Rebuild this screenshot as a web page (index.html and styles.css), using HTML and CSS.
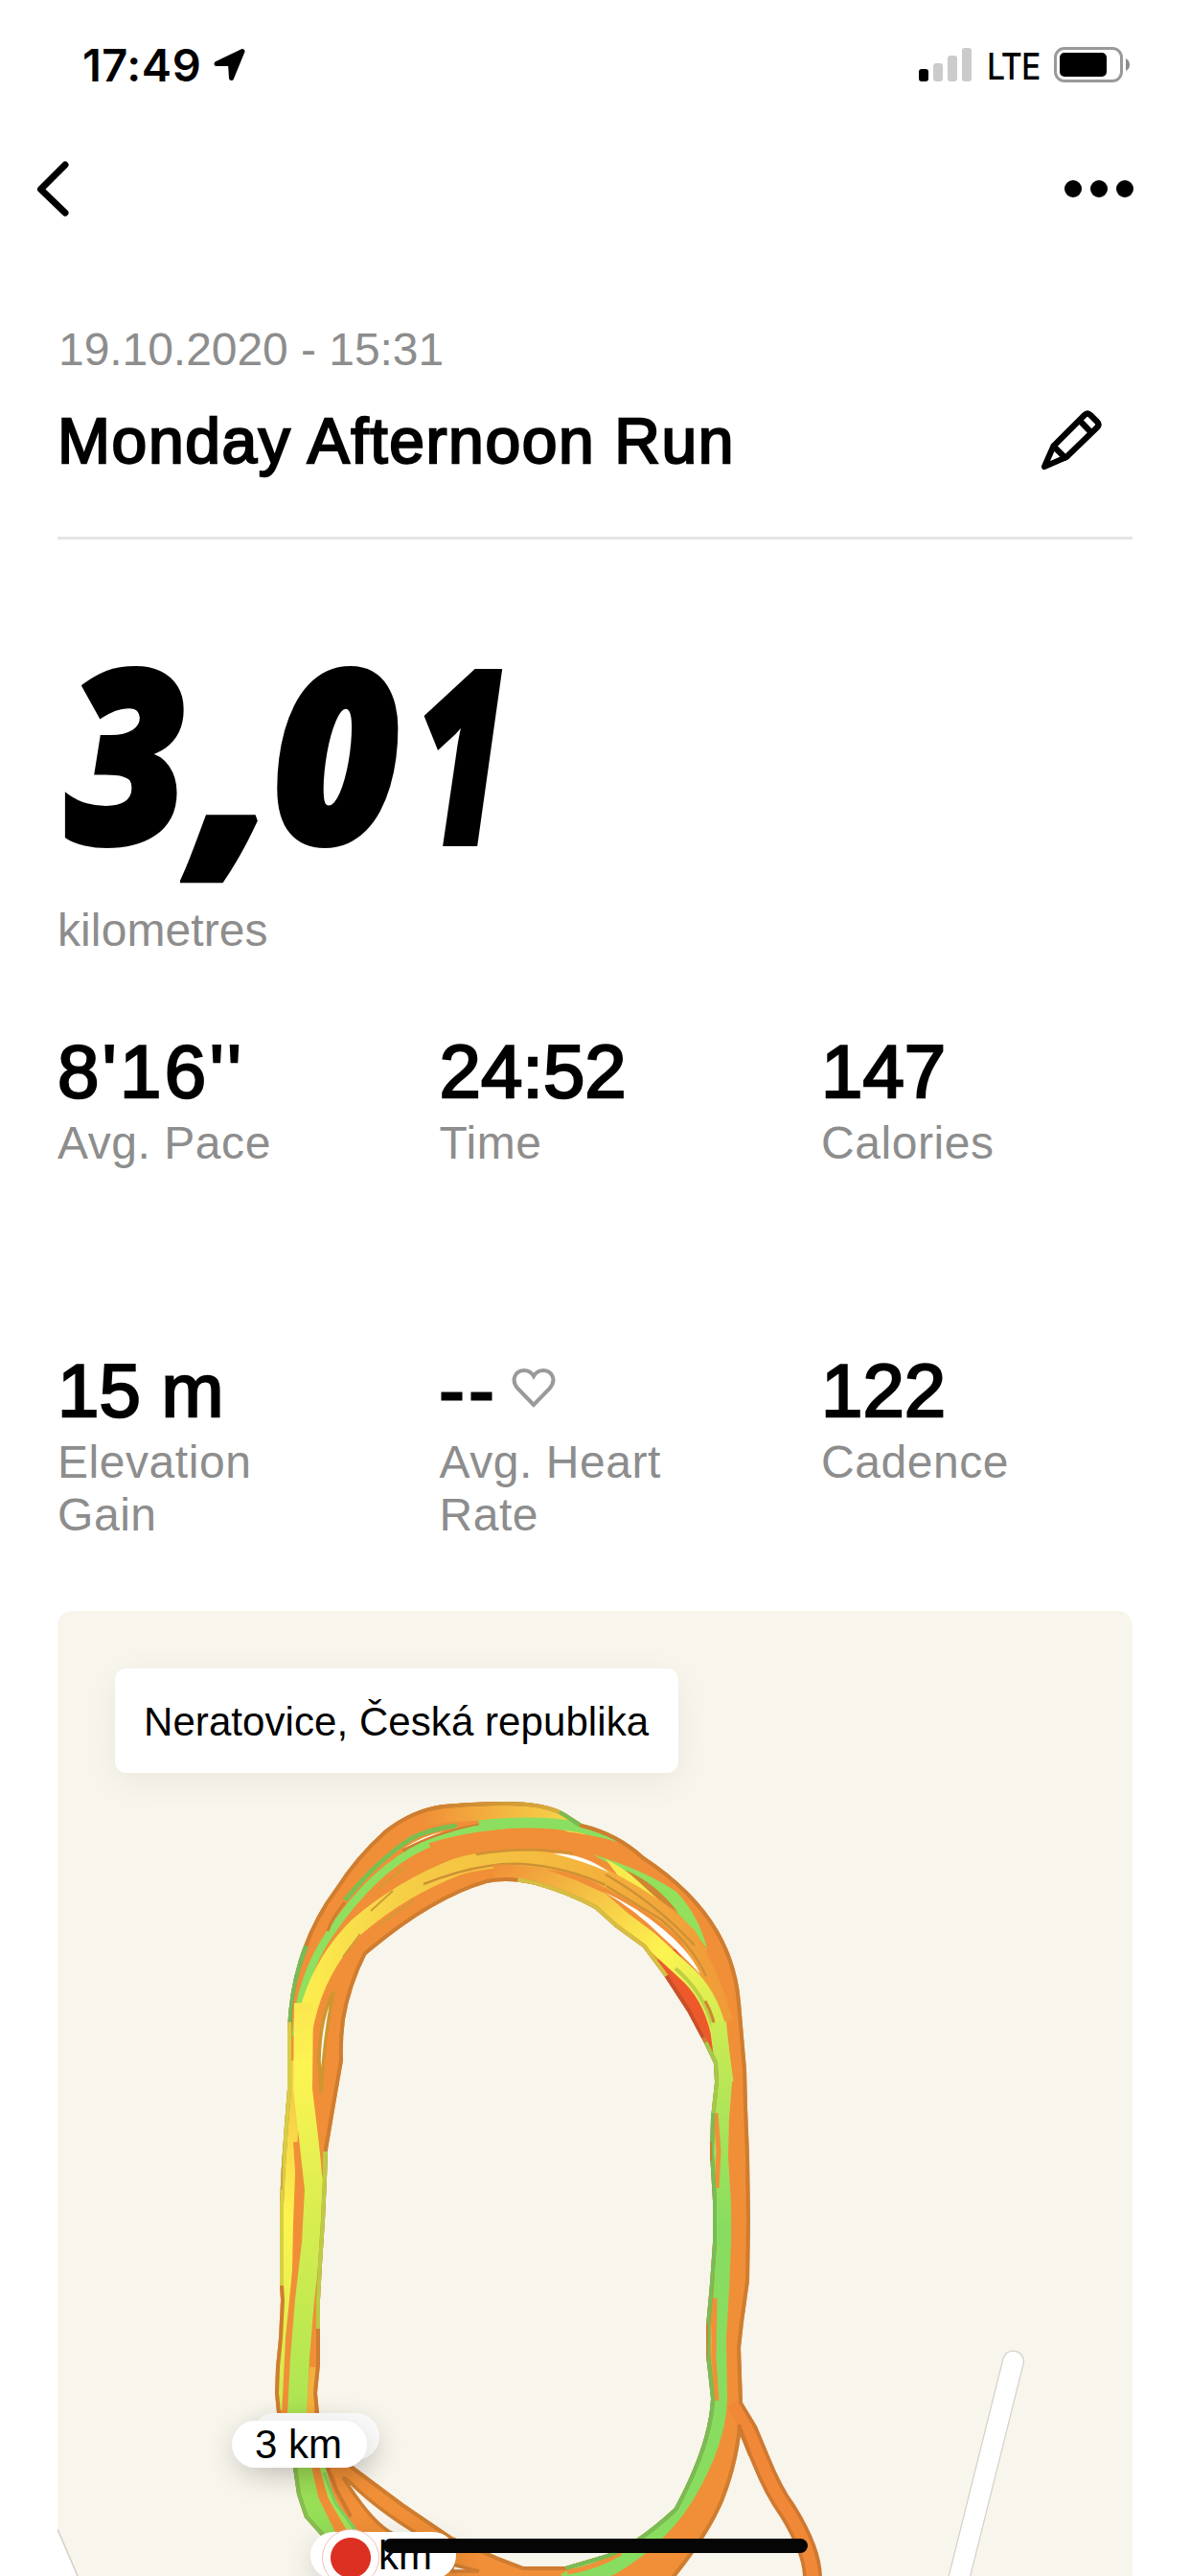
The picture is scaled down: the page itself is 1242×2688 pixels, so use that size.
FILE: index.html
```html
<!DOCTYPE html>
<html lang="en">
<head>
<meta charset="utf-8">
<title>Monday Afternoon Run</title>
<link rel="stylesheet" href="styles.css">
</head>
<body>
<div class="screen">
  <div class="status">
    <div class="status-left">
      <span class="clock">17:49</span>
      <svg class="location" viewBox="0 0 34 36"><path d="M3 16.500 L30 3.500 L18.500 31.500 L17.500 16.500 Z" fill="#000" stroke="#000" stroke-width="5" stroke-linejoin="round"/></svg>
    </div>
    <div class="status-right">
      <svg class="signal" viewBox="0 0 55 36">
        <rect x="0" y="22" width="10" height="13" rx="3"/>
        <g fill="#cbcbcb"><rect x="15" y="16" width="10" height="19" rx="3"/><rect x="30" y="8" width="10" height="27" rx="3"/><rect x="45" y="0" width="10" height="35" rx="3"/></g>
      </svg>
      <span class="network">LTE</span>
      <svg class="battery" viewBox="0 0 80 38">
        <rect x="1.500" y="1.500" width="69" height="34" rx="9.500" fill="none" stroke="#999" stroke-width="3"/>
        <rect x="6" y="6" width="49" height="25" rx="5"/>
        <path d="M75 12 q4 2 4 6.500 t-4 6.500z" fill="#8c8c8c"/>
      </svg>
    </div>
  </div>
  <nav class="nav">
    <svg class="back" viewBox="0 0 36 60"><path d="M31 5 L5.500 30.500 L31 55" fill="none" stroke="#000" stroke-width="7" stroke-linecap="round" stroke-linejoin="round"/></svg>
    <svg class="more" viewBox="0 0 74 20"><circle cx="10" cy="10" r="9"/><circle cx="37" cy="10" r="9"/><circle cx="64" cy="10" r="9"/></svg>
  </nav>
  <header class="heading">
    <div class="date">19.10.2020 - 15:31</div>
    <div class="title-row">
      <h1 class="title">Monday Afternoon Run</h1>
      <svg class="pencil" viewBox="15 15 66 66"><g fill="none" stroke="#000" stroke-width="6.200" stroke-linejoin="round" stroke-linecap="round"><path d="M28.500 55.500 L61 23 Q64 20 67 23 L74 30 Q77 33 74 36 L42 67 L19 77 Z"/><path d="M29 56 L40.500 67.500 M56 29 L67.500 41"/></g></svg>
    </div>
  </header>
  <section class="distance">
    <div class="distance-value"><span class="d3">3</span><span class="dc">,</span><span class="d0">0</span><span class="d1">1</span></div>
    <div class="label distance-label">kilometres</div>
  </section>
  <section class="stats">
    <div class="stat"><div class="value pace">8'16''</div><div class="label">Avg. Pace</div></div>
    <div class="stat"><div class="value">24:52</div><div class="label">Time</div></div>
    <div class="stat"><div class="value">147</div><div class="label">Calories</div></div>
    <div class="stat"><div class="value">15 m</div><div class="label">Elevation<br>Gain</div></div>
    <div class="stat"><div class="value dashes">--<svg class="heart" viewBox="0 0 46 44"><path d="M23 39 L6.500 22 C-2 12 5 3 13 3 Q19.500 3 23 9 Q26.500 3 33 3 C41 3 48 12 39.500 22 Z" fill="none" stroke="#999" stroke-width="4"/></svg></div><div class="label">Avg. Heart<br>Rate</div></div>
    <div class="stat"><div class="value">122</div><div class="label">Cadence</div></div>
  </section>
  <section class="map">
    <svg class="map-art" viewBox="60 1681 1122 1007">
      <defs>
        <path id="ring" clip-rule="evenodd" fill-rule="evenodd" d="M318 2627 L310 2603 L306 2575 L297 2545 L289 2518 L287 2497 L288 2470 L291 2440 L293 2400 L292 2385 V2300 L294 2260 L297 2217 L300 2180 V2120 Q301 2080 312 2045 Q325 2003 350 1970 Q371 1937 401 1910 Q430 1887 463 1883 Q495 1880 528 1880 Q570 1880 590 1892 L607 1903 Q645 1912 672 1937 Q725 1972 750 2015 Q770 2050 773 2090 L779 2160 L780 2200 L782 2250 L783 2317 L782 2380 L776 2423 L773 2450 L775 2508 Q775 2560 755 2610 Q738 2650 696 2700 H400 L336 2647 Z M382 2040 Q366 2072 360 2107 Q357 2130 358 2150 L351 2190 L342 2243 L341 2273 L339 2317 L336 2363 L334 2400 V2467 L331 2497 L333 2518 L345 2555 L367 2572 L422 2613 L472 2647 L520 2668 L546 2678 H590 L624 2668 Q658 2660 704 2617 Q740 2550 742 2503 L737 2457 V2427 L741 2383 L744 2340 V2297 L741 2247 L742 2210 L746 2173 L745 2153 L735 2132 L718 2100 L694 2063 L671 2032 L642 2011 L621 1992 Q594 1977 559 1967 Q530 1960 508 1965 Q450 1982 382 2040 Z"/>
        <clipPath id="track"><use href="#ring"/></clipPath>
        <linearGradient id="left" gradientUnits="userSpaceOnUse" x1="0" y1="1950" x2="0" y2="2640">
          <stop offset="0" stop-color="#f4c846"/><stop offset=".3" stop-color="#fdf452"/><stop offset=".5" stop-color="#ddee50"/><stop offset=".7" stop-color="#bde950"/><stop offset="1" stop-color="#92dd58"/>
        </linearGradient>
        <linearGradient id="side" gradientUnits="userSpaceOnUse" x1="0" y1="2180" x2="0" y2="2520">
          <stop offset="0" stop-color="#f7c945"/><stop offset=".4" stop-color="#fdf450"/><stop offset="1" stop-color="#cdea4e"/>
        </linearGradient>
        <linearGradient id="crown" gradientUnits="userSpaceOnUse" x1="310" y1="0" x2="770" y2="0">
          <stop offset="0" stop-color="#fdf04f"/><stop offset=".25" stop-color="#f5cd46"/><stop offset=".6" stop-color="#f4b83e"/><stop offset="1" stop-color="#f09838"/>
        </linearGradient>
        <linearGradient id="outer" gradientUnits="userSpaceOnUse" x1="440" y1="0" x2="610" y2="0">
          <stop offset="0" stop-color="#f08f37"/><stop offset="1" stop-color="#f7dc4a"/>
        </linearGradient>
        <linearGradient id="outerEdge" gradientUnits="userSpaceOnUse" x1="440" y1="0" x2="610" y2="0">
          <stop offset="0" stop-color="#cf7d30"/><stop offset="1" stop-color="#d8b840"/>
        </linearGradient>
        <linearGradient id="inner" gradientUnits="userSpaceOnUse" x1="510" y1="1950" x2="760" y2="2170">
          <stop offset="0" stop-color="#f08f37"/><stop offset=".3" stop-color="#f5c445"/><stop offset=".58" stop-color="#fdf450"/><stop offset="1" stop-color="#bce852"/>
        </linearGradient>
        <linearGradient id="right" gradientUnits="userSpaceOnUse" x1="0" y1="2080" x2="0" y2="2320">
          <stop offset="0" stop-color="#d7ed51"/><stop offset="1" stop-color="#88dd60"/>
        </linearGradient>
      </defs>
      <!-- roads -->
      <path d="M60 2639 L81 2688 H60Z" fill="#fff"/>
      <path d="M60 2639 L81 2688" stroke="#d2cfc7" stroke-width="1.500"/>
      <path d="M1057.500 2464 L1001 2690" stroke="#d5d2ca" stroke-width="23" stroke-linecap="round"/>
      <path d="M1057.500 2464 L1001 2690" stroke="#fff" stroke-width="20.500" stroke-linecap="round"/>
      <!-- branch leaving the oval -->
      <path d="M764 2508 L781 2536 L794 2567 C804 2592 811 2605 822 2620 Q848 2662 848 2690" fill="none" stroke="#cf7830" stroke-width="20"/>
      <use href="#ring" fill="#f08f37"/>
      <g clip-path="url(#track)" fill="none" stroke-linejoin="round">
        <!-- north curve -->
        <path d="M400 1924 Q432 1896 465 1893 L528 1890 C575 1889 592 1900 612 1914" stroke="url(#outer)" stroke-width="17"/>
        <path d="M477 1905 Q450 1908 430 1918 Q395 1940 360 1983" stroke="#7cbf50" stroke-width="5"/>
        <path d="M421 1932 Q460 1911 514 1903" stroke="#cf7d30" stroke-width="5"/>
        <path d="M309 2125 Q312 2065 344 2018 Q390 1950 442 1926 Q485 1908 530 1904" stroke="#8fe05e" stroke-width="8"/>
        <path d="M500 1905 Q560 1898 607 1907 Q632 1914 652 1926" stroke="#8cde60" stroke-width="11"/>
        <path d="M360 1985 Q346 2002 342 2015" stroke="#cf7d30" stroke-width="3"/>
        <path d="M450 1931 Q500 1916 540 1917 Q600 1916 650 1932 Q690 1945 730 2000" stroke="#f08f37" stroke-width="16"/>
        <path d="M618 1935 Q670 1950 706 1974 Q730 2000 738 2034 Q700 1975 618 1935Z" fill="#93e05c"/>
        <path d="M652 1951 Q685 1965 708 1996 Q680 1978 652 1951Z" fill="#cf8531"/>
        <path d="M632 1940 Q650 1948 666 1963 Q705 1998 738 2036 Q700 2008 660 1977Z" fill="#f8eb4e"/>
        <path d="M756 2110 Q745 2067 718 2020 Q690 1990 632 1960 C590 1936 520 1935 477 1948 Q420 1970 373 2010 Q328 2055 317 2120 L315 2190" stroke="url(#crown)" stroke-width="18"/>
        <path d="M497 1935 Q552 1926 598 1934 M442 1966 Q500 1943 545 1945 Q590 1948 632 1967 M633 1968 L690 2003 Q722 2030 737 2062 M632 1956 Q683 1985 725 2030" stroke="#cf9135" stroke-width="2.500"/>
        <path d="M387 1994 L410 1973 M395 2009 L432 1983 M395 1970 L425 1947 M358 2042 L376 2018" stroke="#d29a38" stroke-width="2"/>
        <path d="M694 2040 L727 2092 L746 2150" stroke="#ee592c" stroke-width="26"/>
        <path d="M515 1954 H530 L562 1957 L598 1970 L627 1983 L650 2003 L678 2024 L714 2057 Q741 2080 750 2120 L757 2173" stroke="url(#inner)" stroke-width="17"/>
        <path d="M705 2054 Q735 2080 744 2115" stroke="#bfcf45" stroke-width="4"/>
        <path d="M736 2088 Q746 2105 748 2128" stroke="#cf8531" stroke-width="3"/>
        <!-- right straight and south curve -->
        <path d="M750 2110 L756 2173 L753 2210 L752 2250 L755 2300 L755 2340 L753 2390 L750 2440 L751 2503 Q750 2545 722 2595 Q695 2645 640 2678 L600 2694" stroke="url(#right)" stroke-width="16"/>
        <path d="M690 2620 Q665 2655 620 2680 L590 2695" stroke="#88dd60" stroke-width="20"/>
        <path d="M747 2205 L750 2245 L748 2283 M746 2398 L745 2460 L748 2505 M592 2684 Q620 2680 648 2664" stroke="#f09038" stroke-width="5"/>
        <!-- left straight -->
        <path d="M305 2150 L306 2210 L302 2270 L300 2320 L299 2370 L297 2450 L295 2515" stroke="url(#side)" stroke-width="12"/>
        <path d="M310 2235 L313 2280 L313 2325 L308 2380 L302 2440 L298 2520" stroke="#f08f37" stroke-width="8"/>
        <path d="M317 2090 L316 2180 L322 2230 L328 2285 L325 2340 L318 2400 L313 2460 L310 2520 L315 2575 L323 2610 L345 2655" stroke="url(#left)" stroke-width="20"/>
        <path d="M331 2150 L334 2200 L338 2270" stroke="#f08f37" stroke-width="4"/>
        <path d="M327 2470 L324 2518" stroke="#f3b03f" stroke-width="8"/>
        <path d="M334 2565 L345 2605 L368 2645" stroke="#a3e258" stroke-width="6"/>
        <path d="M338 2580 L350 2612 L375 2645" stroke="#7bd062" stroke-width="3"/>
        <path d="M336 2560 L352 2600 L366 2626" stroke="#cf7830" stroke-width="4"/>
        <!-- darker rims, outside then inside -->
        <g stroke-width="8" stroke="#cf7d30">
          <use href="#ring"/>
          <path d="M440 1887 L463 1883 Q495 1880 528 1880 Q570 1880 590 1892" stroke="url(#outerEdge)"/>
          <path d="M585 1889 L606 1903" stroke="#78bb52"/>
          <path d="M300 2110 Q302 2070 318 2030" stroke="#72bd57"/>
          <path d="M292 2385 V2300 L294 2260 L297 2217 L300 2180 V2110" stroke="#d6cf45"/>
          <path d="M293 2235 L292 2285" stroke="#cb9b38" stroke-width="5"/>
          <path d="M540 1963 L559 1967 Q594 1977 621 1992 L642 2011 L671 2032 L694 2063" stroke="#d6bf42"/>
          <path d="M694 2063 L718 2100 L732 2127" stroke="#cb4e2a"/>
          <path d="M735 2132 L745 2153 L746 2173 L742 2210" stroke="#a0cb4b"/>
          <path d="M742 2205 L741 2247 L744 2297 V2340 L741 2383 L737 2427 V2457 L742 2503 Q740 2550 704 2617 Q658 2660 624 2668 L590 2678" stroke="#77bd55"/>
          <path d="M741 2235 V2255 M737 2425 L736 2470" stroke="#cf7d30" stroke-width="4"/>
          <path d="M341 2245 L341 2273 L339 2317 L336 2363 L334 2400 V2430" stroke="#bccc45"/>
          <path d="M336 2647 L318 2627 L310 2603 L306 2575 L297 2545" stroke="#82c052"/>
        </g>
      </g>
      <path d="M764 2508 L781 2536 L794 2567 C804 2592 811 2605 822 2620 Q848 2662 848 2690" fill="none" stroke="#f08837" stroke-width="12.500"/>
      <!-- gaps between laps -->
      <g fill="#fffdf8">
        <path d="M630 1974 Q665 1990 692 2013 Q720 2036 731 2060 Q712 2040 690 2020 Q662 1992 630 1974Z"/>
        <path d="M577 1934 Q610 1934 636 1954 Q610 1942 577 1934Z"/>
        <path d="M421 1929 Q440 1916 463 1911 Q440 1919 421 1929Z"/>
        <g stroke-width="3.500">
          <path d="M348 2078 Q334 2105 333 2150 L335 2184 Q338 2130 348 2078Z" fill="#f8f5ec" stroke="#d0952f"/>
          <path d="M358 2585 L364 2589 Q400 2625 460 2658 Q430 2656 405 2641 Q385 2628 358 2585Z" fill="#f8f5ec" stroke="#cf7d30"/>
          <path d="M472 2676 L500 2683 H472Z" fill="#f8f5ec" stroke="#cf7d30"/>
        </g>
      </g>
      <path d="M771 2530 L783 2562" fill="none" stroke="#cf7830" stroke-width="4"/>
    </svg>
    <div class="place">Neratovice, Česká republika</div>
    <div class="pin pin-back"></div>
    <div class="pin pin-three">3 km</div>
    <div class="pin pin-start">km</div>
    <div class="finish"></div>
  </section>
  <div class="home-bar"></div>
</div>
</body>
</html>
```
FILE: styles.css
```css
* { box-sizing: border-box; }
body { margin: 0; background: #fff; color: #000; font-family: "Liberation Sans", Arial, sans-serif; }
svg { display: block; }
.screen { position: relative; width: 1242px; height: 2688px; overflow: hidden; display: flex; flex-direction: column; }

.status { height: 132px; flex: none; display: flex; justify-content: space-between; padding: 49px 61px 0 86px; font-family: Inter, sans-serif; }
.status-left, .status-right { display: flex; align-items: flex-start; }
.clock { font-size: 47px; font-weight: 600; line-height: 38px; letter-spacing: .5px; }
.location { width: 34px; height: 36px; margin: 1px 0 0 13px; }
.signal { width: 55px; height: 36px; margin-top: 1px; }
.network { font-size: 38px; font-weight: 500; line-height: 41px; width: 71px; margin: 0 -1px 0 16px; letter-spacing: -1.2px; transform: scaleX(.89); transform-origin: 0 50%; }
.battery { width: 80px; height: 38px; }
.status-right { margin-right: 1px; }

.nav { height: 205px; flex: none; display: flex; justify-content: space-between; padding: 35px 58px 0 37px; }
.back { width: 36px; height: 60px; }
.more { width: 74px; height: 20px; margin-top: 20px; }

.heading { height: 226px; flex: none; margin: 0 60px; border-bottom: 3px solid #e5e5e5; }
.date { font-size: 48px; line-height: 56px; color: #8d8d8d; letter-spacing: -.05px; padding-left: 1px; }
.title-row { display: flex; justify-content: space-between; align-items: flex-start; margin-top: 27px; }
.title { margin: 0; font-size: 66px; line-height: 80px; font-weight: 400; letter-spacing: 1.6px; -webkit-text-stroke: 2.3px #000; }
.pencil { width: 66px; height: 66px; margin: 5px 30px 0 0; }

.distance { height: 510px; flex: none; padding: 92px 60px 0; }
.distance-value { height: 289px; display: flex; font: italic 800 251px/256px "Open Sans", sans-serif; }
.distance-value span { display: block; transform-origin: 0 50%; -webkit-text-stroke: 6px #000; }
.d3 { width: 137px; margin-left: 9px; transform: scaleX(.87); }
.dc { width: 79px; transform: scale(1.1, 1.05); }
.d0 { width: 148px; transform: scaleX(.9); }
.d1 { transform: scaleX(.67); }
.label { font-size: 48px; line-height: 54.5px; color: #8d8d8d; letter-spacing: .55px; }
.distance-label { letter-spacing: .1px; }

.stats { height: 608px; flex: none; padding: 0 0 0 60px; display: grid; grid-template-columns: 398.5px 398.5px 1fr; grid-template-rows: 333px 275px; }
.value { display: flex; font-size: 78px; line-height: 90px; margin-bottom: 3px; white-space: pre; -webkit-text-stroke: 2.4px #000; }
.pace { letter-spacing: 3.4px; }
.dashes { letter-spacing: 5px; -webkit-text-stroke-width: 3px; }
.heart { width: 46px; height: 44px; margin: 21px 0 0 14px; -webkit-text-stroke: 0; }

.map { position: relative; width: 1122px; height: 1007px; flex: none; margin-left: 60px; background: #f8f5ec; border-radius: 15px 15px 0 0; overflow: hidden; }
.map-art { width: 1122px; height: 1007px; }
.place { position: absolute; left: 60px; top: 60px; width: 588px; height: 109px; padding-left: 30px; border-radius: 12px; background: #fff; font-size: 42px; line-height: 111px; letter-spacing: .07px; box-shadow: 0 9px 36px rgba(0,0,0,.06); white-space: nowrap; }
.pin { position: absolute; height: 49px; border-radius: 25px; background: #fff; font-size: 42px; line-height: 50px; white-space: nowrap; box-shadow: 0 9px 30px rgba(0,0,0,.14); }
.pin-back { left: 202px; top: 837px; width: 134px; background: #fafafa; }
.pin-three { left: 182px; top: 845px; width: 141px; padding-left: 24px; }
.pin-start { left: 264px; top: 961px; width: 152px; padding-left: 71px; }
.finish { position: absolute; left: 276px; top: 958px; width: 60px; height: 60px; border-radius: 50%; border: 1px solid #f3bcb8; background: radial-gradient(circle, #dc3022 20.500px, #fff 21.500px); }
.home-bar { position: absolute; left: 400px; top: 2649px; width: 443px; height: 15px; border-radius: 8px; background: #050505; }
```
